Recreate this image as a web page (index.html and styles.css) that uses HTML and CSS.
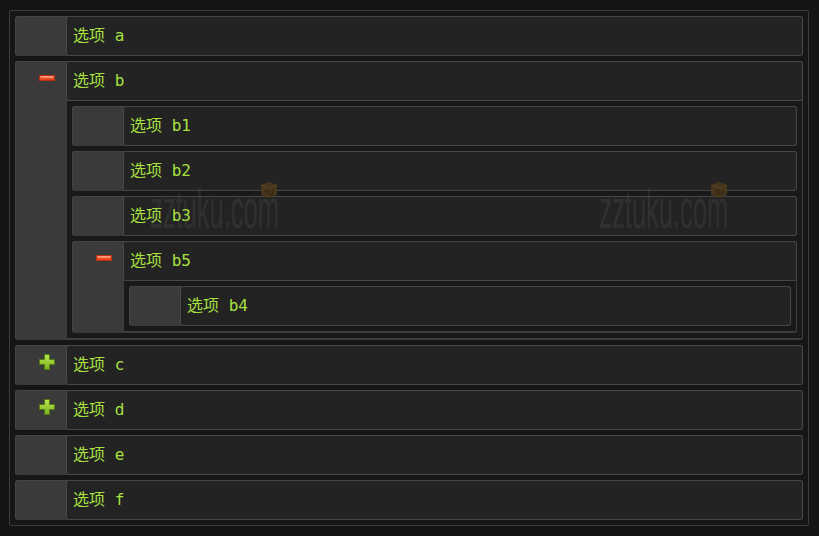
FILE: index.html
```html
<!DOCTYPE html>
<html>
<head>
    <title>Tree Menu</title>
    <link rel="stylesheet" href="styles.css">
</head>
<body>
    <div class="tree">
        <ul class="list">
            <li class="item">
                <div class="handle"></div>
                <div class="body"><div class="label">选项 a</div></div>
            </li>
            <li class="item">
                <div class="handle">
                    <svg class="icon" viewBox="0 0 16 16"><use href="#minus"/></svg>
                </div>
                <div class="body">
                    <div class="label">选项 b</div>
                    <ul class="list sub">
                        <li class="item">
                            <div class="handle"></div>
                            <div class="body"><div class="label">选项 b1</div></div>
                        </li>
                        <li class="item">
                            <div class="handle"></div>
                            <div class="body"><div class="label">选项 b2</div></div>
                        </li>
                        <li class="item">
                            <div class="handle"></div>
                            <div class="body"><div class="label">选项 b3</div></div>
                        </li>
                        <li class="item">
                            <div class="handle">
                                <svg class="icon" viewBox="0 0 16 16"><use href="#minus"/></svg>
                            </div>
                            <div class="body">
                                <div class="label">选项 b5</div>
                                <ul class="list sub">
                                    <li class="item">
                                        <div class="handle"></div>
                                        <div class="body"><div class="label">选项 b4</div></div>
                                    </li>
                                </ul>
                            </div>
                        </li>
                    </ul>
                </div>
            </li>
            <li class="item">
                <div class="handle">
                    <svg class="icon" viewBox="0 0 16 16"><use href="#plus"/></svg>
                </div>
                <div class="body"><div class="label">选项 c</div></div>
            </li>
            <li class="item">
                <div class="handle">
                    <svg class="icon" viewBox="0 0 16 16"><use href="#plus"/></svg>
                </div>
                <div class="body"><div class="label">选项 d</div></div>
            </li>
            <li class="item">
                <div class="handle"></div>
                <div class="body"><div class="label">选项 e</div></div>
            </li>
            <li class="item">
                <div class="handle"></div>
                <div class="body"><div class="label">选项 f</div></div>
            </li>
        </ul>

        <span class="watermark wm-left">zztuku.com</span>
        <svg class="cube cube-left" viewBox="0 0 18 18"><use href="#cube"/></svg>
        <span class="watermark wm-right">zztuku.com</span>
        <svg class="cube cube-right" viewBox="0 0 18 18"><use href="#cube"/></svg>
    </div>

    <svg width="0" height="0" style="position:absolute">
        <defs>
            <linearGradient id="red" x1="0" y1="0" x2="0" y2="1">
                <stop offset="0" stop-color="#ffa080"/>
                <stop offset="0.45" stop-color="#f45a30"/>
                <stop offset="1" stop-color="#d8360e"/>
            </linearGradient>
            <linearGradient id="green" x1="0" y1="0" x2="0" y2="1">
                <stop offset="0" stop-color="#b8e850"/>
                <stop offset="1" stop-color="#7cb020"/>
            </linearGradient>
            <g id="minus">
                <rect x="0.5" y="5.5" width="15" height="5" fill="url(#red)" stroke="#b83010"/>
                <rect x="2" y="6.5" width="12" height="1" fill="#ffc0a8" opacity="0.8"/>
            </g>
            <g id="plus">
                <path d="M5.5 0.5h5v5h5v5h-5v5h-5v-5h-5v-5h5z" fill="url(#green)" stroke="#507c10"/>
            </g>
            <g id="cube">
                <path d="M9 1l8 3v10l-8 3-8-3V4z" fill="#4a3a1c"/>
                <path d="M1 4l8 3 8-3" fill="none" stroke="#5a4822"/>
                <text x="9" y="14" font-size="7" text-anchor="middle" fill="#2a2010" font-family="DejaVu Sans">TU</text>
            </g>
        </defs>
    </svg>
</body>
</html>
```

FILE: styles.css
```css
body {
    background-color: #151515;
    margin: 0;
    padding: 10px 0 0 9px;
    font-family: "DejaVu Sans Mono", "Noto Sans CJK SC", monospace;
}

.tree {
    position: relative;
    width: 788px;
    padding: 5px;
    border: 1px solid #3a3a3a;
    border-radius: 2px;
    background-color: #161616;
}

.list {
    list-style: none;
    margin: 0;
    padding: 0;
    display: flex;
    flex-direction: column;
    gap: 5px;
}

.item {
    display: flex;
    background-color: #3a3a3a;
    border-radius: 3px;
    box-shadow: inset 1px 1px 0 #444;
}

.handle {
    width: 51px;
    flex-shrink: 0;
    position: relative;
}

.icon {
    position: absolute;
    left: 24px;
    top: 9px;
    width: 16px;
    height: 16px;
}

.body {
    flex: 1;
    min-width: 0;
    display: flex;
    flex-direction: column;
}

.label {
    height: 38px;
    line-height: 38px;
    padding-left: 6px;
    border: 1px solid #474747;
    border-radius: 3px;
    background-color: #232323;
    color: #a8e040;
    font-size: 16px;
}

.sub {
    padding: 5px;
    margin-bottom: 1px;
    border: 1px solid #3e3e3e;
    border-top: none;
    background-color: #191919;
}

/* watermark */
.watermark {
    position: absolute;
    top: 170px;
    font-family: "Liberation Sans", sans-serif;
    font-size: 56px;
    line-height: 56px;
    color: rgba(120, 120, 120, 0.18);
    white-space: nowrap;
    pointer-events: none;
}

.wm-left {
    left: 140px;
    transform: scaleX(0.455);
    transform-origin: left top;
}

.wm-right {
    right: 80px;
    transform: scaleX(0.455);
    transform-origin: right top;
}

.cube {
    position: absolute;
    top: 170px;
    width: 18px;
    height: 18px;
    opacity: 0.9;
    pointer-events: none;
}

.cube-left {
    left: 250px;
}

.cube-right {
    left: 700px;
}
```
